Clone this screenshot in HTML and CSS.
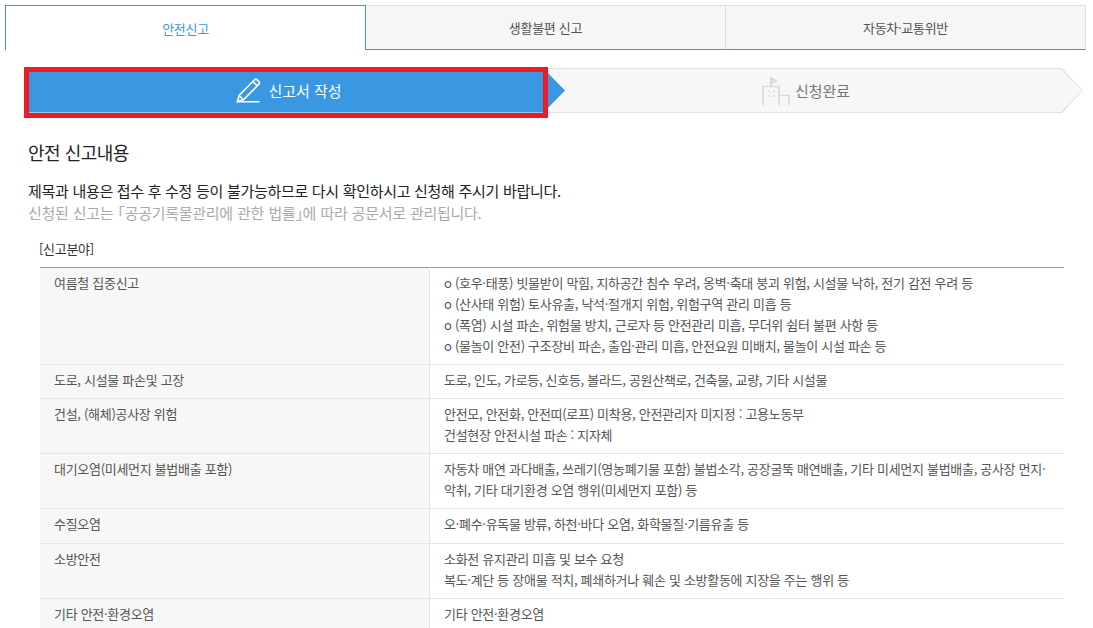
FILE: index.html
```html
<!doctype html>
<html lang="ko">
<head>
	<meta charset="utf-8">
	<title>안전신고</title>
	<link rel="stylesheet" href="styles.css">
</head>
<body>
	<ul class="tabs">
		<li class="tab active">안전신고</li>
		<li class="tab">생활불편 신고</li>
		<li class="tab">자동차·교통위반</li>
	</ul>

	<div class="steps">
		<div class="step step-on">
			<svg class="step-icon" viewBox="0 0 26 26" width="26" height="26" fill="none" stroke="#fff" stroke-width="1.6">
				<path d="M1.5 24.5l1.6-6L18.6 2.8a1.8 1.8 0 0 1 2.5 0l1.8 1.8a1.8 1.8 0 0 1 0 2.5L7.4 22.8z"/>
				<path d="M3.1 18.5l4.3 4.3M17 4.6l4.4 4.4"/>
				<path d="M1 24.8h22.6" stroke-width="1.4"/>
			</svg>
			<span>신고서 작성</span>
		</div>
		<div class="step step-off">
			<svg class="step-icon" viewBox="0 0 28 28" width="28" height="28" fill="none" stroke="#d9d9d9" stroke-width="1.7">
				<path d="M1 28V9.5h16V28M17 18.5h10V28M9 9.5V1"/>
				<path d="M9 1l5 3-5 2.5z" fill="#e4e4e4"/>
				<path d="M6 14.5h2M11 14.5h2M6 19h2M11 19h2"/>
			</svg>
			<span>신청완료</span>
		</div>
		<div class="red-box"></div>
	</div>

	<h2 class="title">안전 신고내용</h2>
	<p class="notice">제목과 내용은 접수 후 수정 등이 불가능하므로 다시 확인하시고 신청해 주시기 바랍니다.</p>
	<p class="notice notice-sub">신청된 신고는 ｢공공기록물관리에 관한 법률｣에 따라 공문서로 관리됩니다.</p>

	<div class="field">
		<p class="field-label">[신고분야]</p>
		<table class="field-table">
			<tr>
				<th>여름철 집중신고</th>
				<td>o (호우·태풍) 빗물받이 막힘, 지하공간 침수 우려, 옹벽·축대 붕괴 위험, 시설물 낙하, 전기 감전 우려 등<br>o (산사태 위험) 토사유출, 낙석·절개지 위험, 위험구역 관리 미흡 등<br>o (폭염) 시설 파손, 위험물 방치, 근로자 등 안전관리 미흡, 무더위 쉼터 불편 사항 등<br>o (물놀이 안전) 구조장비 파손, 출입·관리 미흡, 안전요원 미배치, 물놀이 시설 파손 등</td>
			</tr>
			<tr>
				<th>도로, 시설물 파손및 고장</th>
				<td>도로, 인도, 가로등, 신호등, 볼라드, 공원산책로, 건축물, 교량, 기타 시설물</td>
			</tr>
			<tr>
				<th>건설, (해체)공사장 위험</th>
				<td>안전모, 안전화, 안전띠(로프) 미착용, 안전관리자 미지정 : 고용노동부<br>건설현장 안전시설 파손 : 지자체</td>
			</tr>
			<tr>
				<th>대기오염(미세먼지 불법배출 포함)</th>
				<td>자동차 매연 과다배출, 쓰레기(영농폐기물 포함) 불법소각, 공장굴뚝 매연배출, 기타 미세먼지 불법배출, 공사장 먼지·<br>악취, 기타 대기환경 오염 행위(미세먼지 포함) 등</td>
			</tr>
			<tr class="row-tall">
				<th>수질오염</th>
				<td>오·폐수·유독물 방류, 하천·바다 오염, 화학물질·기름유출 등</td>
			</tr>
			<tr>
				<th>소방안전</th>
				<td>소화전 유지관리 미흡 및 보수 요청<br>복도·계단 등 장애물 적치, 폐쇄하거나 훼손 및 소방활동에 지장을 주는 행위 등</td>
			</tr>
			<tr>
				<th>기타 안전·환경오염</th>
				<td>기타 안전·환경오염</td>
			</tr>
		</table>
	</div>
</body>
</html>
```

FILE: styles.css
```css
html, body {
	height: 628px;
	overflow: hidden;
}

body {
	margin: 0;
	padding: 5px 0 0 5px;
	box-sizing: border-box;
	background: #fff;
	font-family: "Noto Sans CJK KR", "Noto Sans", sans-serif;
	font-size: 13px;
	letter-spacing: -0.3px;
	color: #555;
}

p, h2, ul {
	margin: 0;
	padding: 0;
}

.tabs {
	display: flex;
	width: 1081px;
	height: 45px;
	list-style: none;
	box-sizing: border-box;
}

.tab {
	flex: 1;
	display: flex;
	align-items: center;
	justify-content: center;
	box-sizing: border-box;
	background: #f6f6f6;
	border: 1px solid #ddd;
	border-left: 0;
	border-bottom: 1px solid #4a8fc7;
}

.tab.active {
	flex: none;
	width: 361px;
	background: #fff;
	color: #3a98e2;
	border: 1px solid #3a98e2;
	border-bottom: 0;
}

.steps {
	position: relative;
	display: flex;
	width: 1054px;
	height: 45px;
	margin: 18px 0 0 24px;
	font-size: 15px;
	letter-spacing: 0;
}

.step {
	display: flex;
	align-items: center;
	justify-content: center;
	gap: 5px;
}

.step-on {
	width: 536px;
	color: #fff;
	background: #3a98e2;
	border-bottom: 1px solid #8fc5f0;
	clip-path: polygon(0 0, 514px 0, 100% 50%, 514px 100%, 0 100%);
	padding-right: 16px;
	gap: 6px;
	box-sizing: border-box;
	z-index: 1;
}

.step-off {
	flex: 1;
	margin-left: -18px;
	padding-right: 18px;
	color: #777;
	background: #e2e2e2;
	clip-path: polygon(0 0, calc(100% - 21px) 0, 100% 50%, calc(100% - 21px) 100%, 0 100%);
	position: relative;
}

.step-off::before {
	content: "";
	position: absolute;
	inset: 1px;
	background: #f7f7f7;
	clip-path: polygon(0 0, calc(100% - 21px) 0, 100% 50%, calc(100% - 21px) 100%, 0 100%);
}

.step-off span, .step-off svg {
	position: relative;
}

.red-box {
	position: absolute;
	left: -5px;
	top: -1px;
	width: 524px;
	height: 51px;
	box-sizing: border-box;
	border: 5px solid #ed1c24;
	z-index: 2;
}

.title {
	margin: 26px 0 0 23px;
	font-size: 18px;
	font-weight: 400;
	letter-spacing: -0.5px;
	line-height: 26px;
	color: #222;
}

.notice {
	margin: 14px 0 0 23px;
	font-size: 15px;
	line-height: 23px;
	color: #222;
}

.notice-sub {
	margin-top: -1px;
	word-spacing: 0.4px;
	color: #aaa;
}

.field {
	margin: 15px 0 0 35px;
	width: 1024px;
}

.field-label {
	margin-left: -1px;
	line-height: 20px;
	color: #333;
	margin-bottom: 8px;
}

.field-table {
	width: 100%;
	border-collapse: collapse;
	border-top: 1px solid #999;
	line-height: 21px;
}

.field-table th, .field-table td {
	vertical-align: top;
	text-align: left;
	font-weight: 400;
	padding: 4px 14px 8px 14px;
	border-bottom: 1px solid #e5e5e5;
}

.field-table th {
	width: 361px;
	background: #f7f7f7;
	border-right: 1px solid #e5e5e5;
}

.row-tall td {
	padding-bottom: 9px;
}
```
